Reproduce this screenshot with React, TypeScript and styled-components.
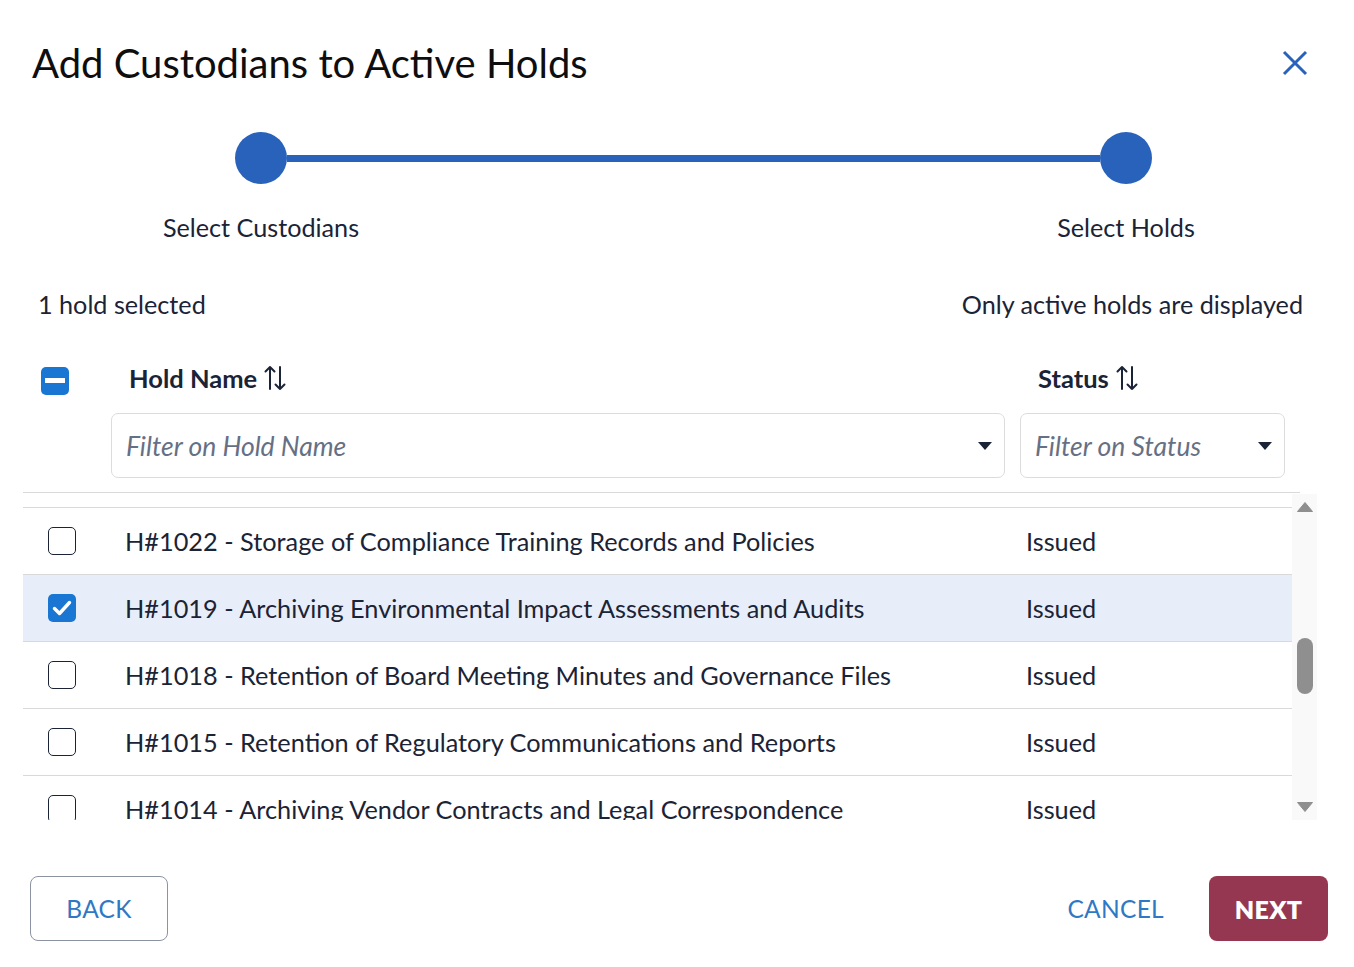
import React from "react";
import styled, { createGlobalStyle } from "styled-components";

const GlobalStyle = createGlobalStyle`
  html, body { margin: 0; padding: 0; background: #ffffff; }
  body { font-family: Lato, "Noto Sans", sans-serif; color: #1b2336; }
  * { box-sizing: border-box; }
`;

const FONT = `Lato, "Noto Sans", sans-serif`;
const INK = "#1b2336";
const BLUE = "#2962bb";

const Dialog = styled.div`
  width: 1354px;
  height: 967px;
  display: flex;
  flex-direction: column;
  background: #fff;
`;

const Header = styled.div`
  display: flex;
  align-items: center;
  justify-content: space-between;
  height: 44px;
  margin-top: 41px;
  padding: 0 44px 0 32px;
`;

const Title = styled.h1`
  margin: 0;
  font-family: ${FONT};
  font-size: 40px;
  font-weight: 400;
  color: #0e0e0e;
  line-height: 44px;
`;

const CloseButton = styled.button`
  border: none;
  background: none;
  padding: 0;
  width: 30px;
  height: 30px;
  display: flex;
  align-items: center;
  justify-content: center;
  cursor: pointer;
`;

const Stepper = styled.div`
  margin: 47px 0 0 235px;
  width: 917px;
  display: flex;
  flex-direction: column;
`;

const StepTrack = styled.div`
  display: flex;
  align-items: center;
`;

const StepDot = styled.div`
  width: 52px;
  height: 52px;
  border-radius: 50%;
  background: ${BLUE};
  flex: none;
`;

const StepLine = styled.div`
  flex: 1;
  height: 7px;
  background: ${BLUE};
`;

const StepLabels = styled.div`
  display: flex;
  justify-content: space-between;
  margin-top: 28px;
`;

const StepLabel = styled.div`
  width: 52px;
  display: flex;
  justify-content: center;
  white-space: nowrap;
  font-size: 25.2px;
  line-height: 30px;
  color: ${INK};
`;

const InfoRow = styled.div`
  display: flex;
  justify-content: space-between;
  margin-top: 47px;
  padding: 0 51px 0 38px;
  font-size: 25.2px;
  line-height: 30px;
  color: ${INK};
`;

const Table = styled.div`
  margin: 45px 37px 0 23px;
  display: flex;
  flex-direction: column;
`;

const HeadGrid = styled.div`
  display: grid;
  grid-template-columns: 73px 894px 265px;
  column-gap: 15px;
  align-items: center;
`;

const HeaderRow = styled(HeadGrid)`
  height: 28px;
`;

const HeadCell = styled.div`
  padding-left: 18px;
  margin-bottom: 5px;
  display: flex;
  align-items: center;
  gap: 6px;
  font-size: 25.5px;
  font-weight: 700;
  line-height: 28px;
  color: ${INK};
`;

const FilterRow = styled(HeadGrid)`
  margin-top: 21px;
`;

const FilterBox = styled.div`
  height: 65px;
  border: 1px solid #dcdcdc;
  border-radius: 7px;
  display: flex;
  align-items: center;
  justify-content: space-between;
  padding: 0 12px 0 14px;
`;

const Placeholder = styled.span`
  font-style: italic;
  font-size: 26.5px;
  color: #667085;
`;

const Separator = styled.div`
  margin-top: 14px;
  width: 1277px;
  height: 1px;
  background: #d9d9d9;
`;

const ListArea = styled.div`
  margin-top: 1px;
  display: flex;
  height: 326px;
`;

const List = styled.div`
  width: 1269px;
  height: 100%;
  overflow: hidden;
  padding-top: 13px;
`;

const Row = styled.div<{ $selected?: boolean }>`
  display: grid;
  grid-template-columns: 102px 901px 1fr;
  align-items: center;
  height: 67px;
  border-top: 1px solid #d9d9d9;
  background: ${(p) => (p.$selected ? "#e8eef9" : "#fff")};
  font-size: 25.3px;
  color: ${INK};
`;

const CheckCell = styled.div`
  padding-left: 25px;
  display: flex;
  align-items: center;
`;

const Box = styled.div<{ $checked?: boolean }>`
  width: 28px;
  height: 28px;
  border-radius: 5px;
  display: flex;
  align-items: center;
  justify-content: center;
  background: ${(p) => (p.$checked ? "#1976d2" : "#fff")};
  border: ${(p) => (p.$checked ? "none" : `1.5px solid ${INK}`)};
`;

const HeaderBox = styled(Box)`
  margin-left: 18px;
`;

const Scrollbar = styled.div`
  width: 25px;
  height: 100%;
  background: #f9f9f9;
  display: flex;
  flex-direction: column;
  align-items: center;
  justify-content: space-between;
  padding: 8px 0 8px;
`;

const ScrollTrack = styled.div`
  flex: 1;
  width: 100%;
  display: flex;
  flex-direction: column;
  align-items: center;
  padding-top: 126px;
`;

const Thumb = styled.div`
  width: 16px;
  height: 56px;
  border-radius: 8px;
  background: #8f8f8f;
`;

const Footer = styled.div`
  margin-top: 56px;
  display: flex;
  align-items: center;
  padding: 0 26px 0 30px;
`;

const OutlineButton = styled.button`
  width: 138px;
  height: 65px;
  border: 1px solid #8c94a3;
  border-radius: 8px;
  background: #fff;
  color: #2f78c4;
  font-family: ${FONT};
  font-size: 24.5px;
  letter-spacing: 0.3px;
  cursor: pointer;
`;

const Spacer = styled.div`
  flex: 1;
`;

const TextButton = styled.button`
  height: 65px;
  padding: 0 20px;
  border: none;
  background: none;
  color: #2f78c4;
  font-family: ${FONT};
  font-size: 24.5px;
  letter-spacing: 0.3px;
  cursor: pointer;
  margin-right: 25px;
`;

const PrimaryButton = styled.button`
  width: 119px;
  height: 65px;
  border: none;
  border-radius: 8px;
  background: #963752;
  color: #fff;
  font-family: ${FONT};
  font-size: 25px;
  font-weight: 800;
  letter-spacing: 0.3px;
  cursor: pointer;
`;

const SortIcon = () => (
  <svg width="24" height="26" viewBox="0 0 24 26" fill="none" stroke={INK} strokeWidth="2" strokeLinecap="round" strokeLinejoin="round">
    <path d="M7 24V2M2.5 6.5L7 2l4.5 4.5" />
    <path d="M17 2v22M12.5 19.5L17 24l4.5-4.5" />
  </svg>
);

const Caret = () => (
  <svg width="14" height="8" viewBox="0 0 14 8">
    <path d="M0 0h14L7 8z" fill={INK} />
  </svg>
);

const CloseIcon = () => (
  <svg width="26" height="26" viewBox="0 0 26 26" stroke={BLUE} strokeWidth="3">
    <path d="M2 2l22 22M24 2L2 24" />
  </svg>
);

const Tick = () => (
  <svg width="20" height="16" viewBox="0 0 20 16" fill="none" stroke="#fff" strokeWidth="3.4" strokeLinecap="round" strokeLinejoin="round">
    <path d="M2.5 8.5l5 5L17.5 2.5" />
  </svg>
);

const Dash = () => (
  <svg width="20" height="6" viewBox="0 0 20 6">
    <rect x="0" y="0" width="20" height="5" fill="#fff" />
  </svg>
);

const ArrowUp = () => (
  <svg width="16" height="10" viewBox="0 0 16 10">
    <path d="M8 0.5L15.5 9.5H0.5z" fill="#8f8f8f" strokeLinejoin="round" stroke="#8f8f8f" />
  </svg>
);

const ArrowDown = () => (
  <svg width="16" height="10" viewBox="0 0 16 10">
    <path d="M0.5 0.5h15L8 9.5z" fill="#8f8f8f" strokeLinejoin="round" stroke="#8f8f8f" />
  </svg>
);

type Hold = { id: string; name: string; status: string; selected?: boolean };

const holds: Hold[] = [
  { id: "H#1022", name: "Storage of Compliance Training Records and Policies", status: "Issued" },
  { id: "H#1019", name: "Archiving Environmental Impact Assessments and Audits", status: "Issued", selected: true },
  { id: "H#1018", name: "Retention of Board Meeting Minutes and Governance Files", status: "Issued" },
  { id: "H#1015", name: "Retention of Regulatory Communications and Reports", status: "Issued" },
  { id: "H#1014", name: "Archiving Vendor Contracts and Legal Correspondence", status: "Issued" },
];

export default function App() {
  return (
    <>
      <GlobalStyle />
      <Dialog>
        <Header>
          <Title>Add Custodians to Active Holds</Title>
          <CloseButton aria-label="Close">
            <CloseIcon />
          </CloseButton>
        </Header>

        <Stepper>
          <StepTrack>
            <StepDot />
            <StepLine />
            <StepDot />
          </StepTrack>
          <StepLabels>
            <StepLabel>Select Custodians</StepLabel>
            <StepLabel>Select Holds</StepLabel>
          </StepLabels>
        </Stepper>

        <InfoRow>
          <span>1 hold selected</span>
          <span>Only active holds are displayed</span>
        </InfoRow>

        <Table>
          <HeaderRow>
            <HeaderBox $checked>
              <Dash />
            </HeaderBox>
            <HeadCell>
              Hold Name <SortIcon />
            </HeadCell>
            <HeadCell>
              Status <SortIcon />
            </HeadCell>
          </HeaderRow>
          <FilterRow>
            <div />
            <FilterBox>
              <Placeholder>Filter on Hold Name</Placeholder>
              <Caret />
            </FilterBox>
            <FilterBox>
              <Placeholder>Filter on Status</Placeholder>
              <Caret />
            </FilterBox>
          </FilterRow>
          <Separator />
          <ListArea>
            <List>
              {holds.map((h) => (
                <Row key={h.id} $selected={h.selected}>
                  <CheckCell>
                    <Box $checked={h.selected}>{h.selected && <Tick />}</Box>
                  </CheckCell>
                  <span>
                    {h.id} - {h.name}
                  </span>
                  <span>{h.status}</span>
                </Row>
              ))}
            </List>
            <Scrollbar>
              <ArrowUp />
              <ScrollTrack>
                <Thumb />
              </ScrollTrack>
              <ArrowDown />
            </Scrollbar>
          </ListArea>
        </Table>

        <Footer>
          <OutlineButton>BACK</OutlineButton>
          <Spacer />
          <TextButton>CANCEL</TextButton>
          <PrimaryButton>NEXT</PrimaryButton>
        </Footer>
      </Dialog>
    </>
  );
}
